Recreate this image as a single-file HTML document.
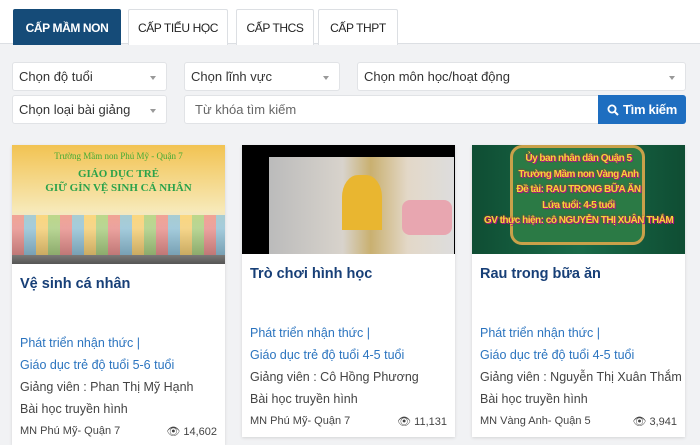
<!DOCTYPE html>
<html><head><meta charset="utf-8"><style>
*{box-sizing:border-box;margin:0;padding:0}
body{width:700px;height:442px;overflow:hidden;background:#f1f2f4;font-family:"Liberation Sans",sans-serif;position:relative}
.top{position:absolute;left:0;top:0;width:700px;height:44px;background:#fff;border-bottom:1px solid #dcdfe3}
.tab{position:absolute;top:9px;height:36px;border:1px solid #dcdfe3;border-bottom:none;background:#fff;font-size:12px;letter-spacing:-0.4px;color:#222;display:flex;align-items:center;justify-content:center;border-radius:2px 2px 0 0}
.tab.a{background:#154b78;color:#fff;border-color:#154b78;font-weight:bold}
.sel{position:absolute;height:29px;background:#fff;border:1px solid #e1e3e6;border-radius:3px;font-size:13px;color:#333;padding-left:6px;display:flex;align-items:center}
.sel:after{content:"";position:absolute;right:10px;top:13px;border:3px solid transparent;border-top:4px solid #999}
.sel.n:after{display:none}
.btn{position:absolute;left:598px;top:95px;width:88px;height:29px;background:#1e6ec0;color:#fff;font-size:13px;font-weight:bold;letter-spacing:-0.3px;border-radius:0 3px 3px 0;display:flex;align-items:center;justify-content:center;gap:4px}
.card{position:absolute;top:145px;width:213px;background:#fff;box-shadow:0 1px 3px rgba(0,0,0,.12)}
.img{width:100%;overflow:hidden;position:relative}
.t{position:absolute;left:8px;font-size:14.5px;color:#173f77;font-weight:bold}
.m{position:absolute;left:8px;font-size:12.5px;color:#2b74bf}
.g{position:absolute;left:8px;font-size:12.5px;color:#444}
.f{position:absolute;left:8px;right:8px;font-size:11px;color:#444;display:flex;justify-content:space-between}
</style></head><body>
<div class="top"></div>
<div class="tab a" style="left:13px;width:108px">CẤP MẦM NON</div>
<div class="tab" style="left:128px;width:100px">CẤP TIỂU HỌC</div>
<div class="tab" style="left:236px;width:78px">CẤP THCS</div>
<div class="tab" style="left:318px;width:80px">CẤP THPT</div>

<div class="sel" style="left:12px;top:62px;width:155px">Chọn độ tuổi</div>
<div class="sel" style="left:184px;top:62px;width:156px">Chọn lĩnh vực</div>
<div class="sel" style="left:357px;top:62px;width:329px">Chọn môn học/hoạt động</div>
<div class="sel" style="left:12px;top:95px;width:155px">Chọn loại bài giảng</div>
<div class="sel n" style="left:184px;top:95px;width:416px;color:#666;padding-left:10px;border-radius:3px 0 0 3px">Từ khóa tìm kiếm</div>
<div class="btn"><svg width="12" height="12" viewBox="0 0 12 12"><circle cx="5" cy="5" r="3.6" fill="none" stroke="#fff" stroke-width="1.8"/><path d="M7.6 7.6L11 11" stroke="#fff" stroke-width="2"/></svg>Tìm kiếm</div>

<div class="card" style="left:12px;height:300px">
<div class="img" style="height:119px;background:linear-gradient(#f2c352,#f7e9b8 55%,#e8e4da 70%,#555 100%)">
<div style="position:absolute;top:6px;width:100%;text-align:center;font:9px 'Liberation Serif',serif;color:#4a3">Trường Mầm non Phú Mỹ - Quận 7</div>
<div style="position:absolute;top:22px;width:100%;text-align:center;font:bold 11px 'Liberation Serif',serif;color:#2aa24a;line-height:14px">GIÁO DỤC TRẺ<br>GIỮ GÌN VỆ SINH CÁ NHÂN</div>
<div style="position:absolute;top:70px;width:100%;height:40px;background:repeating-linear-gradient(90deg,#e77 0 12px,#7bd 12px 24px,#fc5 24px 36px,#9c6 36px 48px);opacity:.6"></div>
</div>
<div class="t" style="top:131px">Vệ sinh cá nhân</div>
<div class="m" style="top:191px">Phát triển nhận thức |</div>
<div class="m" style="top:213px">Giáo dục trẻ độ tuổi 5-6 tuổi</div>
<div class="g" style="top:235px">Giảng viên : Phan Thị Mỹ Hạnh</div>
<div class="g" style="top:257px">Bài học truyền hình</div>
<div class="f" style="top:280px"><span>MN Phú Mỹ- Quận 7</span><span>👁 14,602</span></div>
</div>

<div class="card" style="left:242px;height:292px">
<div class="img" style="height:109px;background:#000">
<div style="position:absolute;left:27px;top:12px;width:185px;height:97px;background:linear-gradient(90deg,#bbb,#d8d3cc 40%,#c9b070 55%,#e3d8c8 75%,#ddd)"></div>
<div style="position:absolute;left:100px;top:30px;width:40px;height:55px;background:#e9b630;border-radius:40% 40% 0 0"></div>
<div style="position:absolute;left:160px;top:55px;width:50px;height:35px;background:#e8a6b0;border-radius:8px"></div>
</div>
<div class="t" style="top:121px">Trò chơi hình học</div>
<div class="m" style="top:181px">Phát triển nhận thức |</div>
<div class="m" style="top:203px">Giáo dục trẻ độ tuổi 4-5 tuổi</div>
<div class="g" style="top:225px">Giảng viên : Cô Hồng Phương</div>
<div class="g" style="top:247px">Bài học truyền hình</div>
<div class="f" style="top:270px"><span>MN Phú Mỹ- Quận 7</span><span>👁 11,131</span></div>
</div>

<div class="card" style="left:472px;height:292px">
<div class="img" style="height:109px;background:linear-gradient(90deg,#0f4d33,#1a6b49 50%,#0f4d33)">
<div style="position:absolute;left:38px;top:0;width:135px;height:100px;background:#2b7a45;border:3px solid #c9a14a;border-radius:12px"></div>
<div style="position:absolute;top:6px;width:100%;text-align:center;font:bold 10px 'Liberation Sans',sans-serif;letter-spacing:-0.5px;white-space:nowrap;color:#f4d63a;line-height:15.5px;text-shadow:0 0 2px #c22,1px 1px 0 #a1a">Ủy ban nhân dân Quận 5<br>Trường Mầm non Vàng Anh<br>Đề tài: RAU TRONG BỮA ĂN<br>Lứa tuổi: 4-5 tuổi<br>GV thực hiện: cô NGUYỄN THỊ XUÂN THẮM</div>
</div>
<div class="t" style="top:121px">Rau trong bữa ăn</div>
<div class="m" style="top:181px">Phát triển nhận thức |</div>
<div class="m" style="top:203px">Giáo dục trẻ độ tuổi 4-5 tuổi</div>
<div class="g" style="top:225px">Giảng viên : Nguyễn Thị Xuân Thắm</div>
<div class="g" style="top:247px">Bài học truyền hình</div>
<div class="f" style="top:270px"><span>MN Vàng Anh- Quận 5</span><span>👁 3,941</span></div>
</div>
</body></html>
